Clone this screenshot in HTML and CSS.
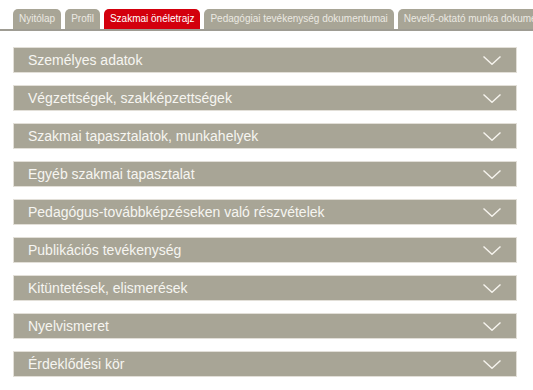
FILE: index.html
```html
<!DOCTYPE html>
<html lang="hu">
<head>
<meta charset="utf-8">
<link rel="stylesheet" href="styles.css">
</head>
<body>
<nav class="tabs">
  <a class="tab">Nyitólap</a>
  <a class="tab">Profil</a>
  <a class="tab active">Szakmai önéletrajz</a>
  <a class="tab">Pedagógiai tevékenység dokumentumai</a>
  <a class="tab">Nevelő-oktató munka dokumentumai</a>
</nav>
<main class="panels">
  <div class="panel"><span>Személyes adatok</span><svg class="chev" viewBox="0 0 18 9"><path d="M0.5 0.5 L9 8.3 L17.5 0.5"/></svg></div>
  <div class="panel"><span>Végzettségek, szakképzettségek</span><svg class="chev" viewBox="0 0 18 9"><path d="M0.5 0.5 L9 8.3 L17.5 0.5"/></svg></div>
  <div class="panel"><span>Szakmai tapasztalatok, munkahelyek</span><svg class="chev" viewBox="0 0 18 9"><path d="M0.5 0.5 L9 8.3 L17.5 0.5"/></svg></div>
  <div class="panel"><span>Egyéb szakmai tapasztalat</span><svg class="chev" viewBox="0 0 18 9"><path d="M0.5 0.5 L9 8.3 L17.5 0.5"/></svg></div>
  <div class="panel"><span>Pedagógus-továbbképzéseken való részvételek</span><svg class="chev" viewBox="0 0 18 9"><path d="M0.5 0.5 L9 8.3 L17.5 0.5"/></svg></div>
  <div class="panel"><span>Publikációs tevékenység</span><svg class="chev" viewBox="0 0 18 9"><path d="M0.5 0.5 L9 8.3 L17.5 0.5"/></svg></div>
  <div class="panel"><span>Kitüntetések, elismerések</span><svg class="chev" viewBox="0 0 18 9"><path d="M0.5 0.5 L9 8.3 L17.5 0.5"/></svg></div>
  <div class="panel"><span>Nyelvismeret</span><svg class="chev" viewBox="0 0 18 9"><path d="M0.5 0.5 L9 8.3 L17.5 0.5"/></svg></div>
  <div class="panel"><span>Érdeklődési kör</span><svg class="chev" viewBox="0 0 18 9"><path d="M0.5 0.5 L9 8.3 L17.5 0.5"/></svg></div>
</main>
</body>
</html>
```

FILE: styles.css
```css
html, body {
  margin: 0;
  padding: 0;
  background: #ffffff;
  overflow: hidden;
}
body {
  font-family: "Liberation Sans", Arial, sans-serif;
  width: 533px;
  height: 390px;
}
.tabs {
  display: flex;
  gap: 4px;
  padding: 9px 0 0 13px;
  border-bottom: 2px solid #9e9c93;
  height: 20px;
  white-space: nowrap;
  overflow: hidden;
}
.tab {
  flex: none;
  display: block;
  height: 20px;
  line-height: 19px;
  padding: 0 6px;
  font-size: 10px;
  color: #ebe9e2;
  background: #a8a596;
  border-radius: 5px 5px 0 0;
}
.tab.active {
  background: #d3000d;
  color: #ffffff;
  height: 22px;
}
.panels {
  display: flex;
  flex-direction: column;
  gap: 12px;
  padding: 16px 16px 0 13px;
}
.panel {
  height: 24px;
  border: 1px solid #e2dfd8;
  background: #a8a596;
  color: #f6f5f1;
  font-size: 14px;
  display: flex;
  align-items: center;
  justify-content: space-between;
  padding: 0 15px 0 14px;
}
.chev {
  width: 18px;
  height: 9px;
  fill: none;
  stroke: #f6f4ee;
  stroke-width: 1.4;
}
```
